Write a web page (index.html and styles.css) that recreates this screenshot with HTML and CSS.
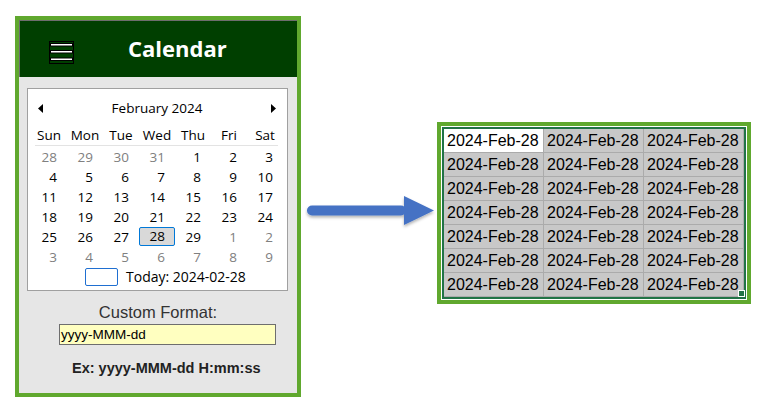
FILE: index.html
```html
<!DOCTYPE html>
<html lang="en">
<head>
<meta charset="utf-8">
<title>Calendar</title>
<link rel="stylesheet" href="styles.css">
</head>
<body>
<div class="scene">
  <section class="panel">
    <header class="bar">
      <svg class="menu" width="25" height="23" viewBox="0 0 25 23">
        <rect x="0.5" y="0.5" width="24" height="22" fill="none" stroke="#000"/>
        <rect x="1.5" y="2.5" width="22" height="2.5" fill="#fff" stroke="#000" stroke-width="1"/>
        <rect x="1.5" y="9.5" width="22" height="2.5" fill="#fff" stroke="#000" stroke-width="1"/>
        <rect x="1.5" y="17" width="22" height="2.5" fill="#fff" stroke="#000" stroke-width="1"/>
      </svg>
      <h1 class="title">Calendar</h1>
    </header>
    <div class="body">
      <div class="cal">
        <div class="nav">
          <svg class="tri" width="5" height="9" viewBox="0 0 5 9"><polygon points="5,0 0,4.5 5,9" fill="#000"/></svg>
          <span class="month">February 2024</span>
          <svg class="tri" width="5" height="9" viewBox="0 0 5 9"><polygon points="0,0 5,4.5 0,9" fill="#000"/></svg>
        </div>
        <div class="week">
          <span>Sun</span><span>Mon</span><span>Tue</span><span>Wed</span><span>Thu</span><span>Fri</span><span>Sat</span>
        </div>
        <div class="sep"></div>
        <div class="days">
          <span class="other">28</span><span class="other">29</span><span class="other">30</span><span class="other">31</span><span>1</span><span>2</span><span>3</span>
          <span>4</span><span>5</span><span>6</span><span>7</span><span>8</span><span>9</span><span>10</span>
          <span>11</span><span>12</span><span>13</span><span>14</span><span>15</span><span>16</span><span>17</span>
          <span>18</span><span>19</span><span>20</span><span>21</span><span>22</span><span>23</span><span>24</span>
          <span>25</span><span>26</span><span>27</span><span class="sel">28</span><span>29</span><span class="other">1</span><span class="other">2</span>
          <span class="other">3</span><span class="other">4</span><span class="other">5</span><span class="other">6</span><span class="other">7</span><span class="other">8</span><span class="other">9</span>
        </div>
        <div class="today">
          <span class="today-box"></span>
          <span class="today-text">Today: 2024-02-28</span>
        </div>
      </div>
      <div class="fmt-label">Custom Format:</div>
      <div class="fmt-input">yyyy-MMM-dd</div>
      <div class="example">Ex: yyyy-MMM-dd H:mm:ss</div>
    </div>
  </section>

  <svg class="arrow" width="132" height="42" viewBox="0 0 132 42">
    <defs>
      <filter id="sh" x="-10%" y="-30%" width="120%" height="170%">
        <feDropShadow dx="0" dy="2" stdDeviation="1.5" flood-color="#000" flood-opacity="0.3"/>
      </filter>
    </defs>
    <g filter="url(#sh)" fill="#4472c4">
      <rect x="2" y="15.5" width="99" height="10" rx="5"/>
      <polygon points="99,6 129,20.5 99,35"/>
    </g>
  </svg>

  <div class="sheet">
    <div class="grid">
      <span class="cell first">2024-Feb-28</span><span class="cell">2024-Feb-28</span><span class="cell">2024-Feb-28</span>
      <span class="cell">2024-Feb-28</span><span class="cell">2024-Feb-28</span><span class="cell">2024-Feb-28</span>
      <span class="cell">2024-Feb-28</span><span class="cell">2024-Feb-28</span><span class="cell">2024-Feb-28</span>
      <span class="cell">2024-Feb-28</span><span class="cell">2024-Feb-28</span><span class="cell">2024-Feb-28</span>
      <span class="cell">2024-Feb-28</span><span class="cell">2024-Feb-28</span><span class="cell">2024-Feb-28</span>
      <span class="cell">2024-Feb-28</span><span class="cell">2024-Feb-28</span><span class="cell">2024-Feb-28</span>
      <span class="cell">2024-Feb-28</span><span class="cell">2024-Feb-28</span><span class="cell">2024-Feb-28</span>
    </div>
    <span class="handle"></span>
  </div>
</div>
</body>
</html>
```

FILE: styles.css
```css
* { box-sizing: border-box; }

html, body {
  margin: 0;
  padding: 0;
  background: #fff;
}

body {
  width: 768px;
  height: 418px;
  overflow: hidden;
  font-family: "Open Sans", "Noto Sans", sans-serif;
}

.scene {
  display: flex;
  align-items: flex-start;
  padding: 16px 0 0 15px;
}

/* ---------- left panel ---------- */
.panel {
  width: 286px;
  height: 381px;
  border: 4px solid #60a82e;
  background: #e6e6e6;
  display: flex;
  flex-direction: column;
}

.bar {
  height: 57px;
  background: #003f00;
  border-top: 1px solid #6d6d6d;
  border-left: 1px solid #6d6d6d;
  display: flex;
  align-items: flex-start;
}

.menu {
  display: block;
  margin: 20px 0 0 29px;
}

.title {
  margin: 12px 0 0 54px;
  font-family: "Open Sans", sans-serif;
  font-weight: 700;
  font-size: 22px;
  line-height: 30px;
  color: #fff;
}

.body {
  flex: 1;
  display: flex;
  flex-direction: column;
  padding: 11px 0 0 0;
}

.cal {
  margin-left: 8px;
  width: 261px;
  height: 203px;
  background: #fff;
  border: 1px solid #a0a0a0;
  padding: 9px 0 0 3px;
  font-size: 13.5px;
  color: #000;
}

.nav {
  height: 20px;
  display: flex;
  align-items: center;
  justify-content: space-between;
  padding: 0 11px 0 7px;
}

.tri { display: block; }

.month {
  line-height: 20px;
}

.week {
  margin-top: 8px;
  display: grid;
  grid-template-columns: repeat(7, 36px);
  height: 19px;
  line-height: 19px;
  text-align: center;
}

.sep {
  height: 1px;
  background: #e3e3e3;
  margin: 0 9px 0 4px;
}

.days {
  margin-top: 1px;
  display: grid;
  grid-template-columns: repeat(7, 36px);
  grid-auto-rows: 20px;
}

.days span {
  text-align: right;
  padding-right: 10px;
  line-height: 20px;
}

.days .other { color: #808080; }

.days .sel {
  height: 19px;
  line-height: 17px;
  padding-right: 9px;
  background: #d9d9d9;
  border: 1px solid #0078d7;
  border-radius: 2px;
}

.today {
  height: 20px;
  display: flex;
  align-items: center;
  padding-left: 54px;
  gap: 8px;
}

.today-box {
  width: 33px;
  height: 18px;
  border: 1px solid #1f6fd1;
  border-radius: 2px;
  background: #fff;
}

.today-text {
  font-size: 14px;
  line-height: 20px;
}

.fmt-label {
  margin-top: 11px;
  text-align: center;
  font-family: "Liberation Sans", Arial, sans-serif;
  font-size: 16.5px;
  line-height: 20px;
  color: #333;
}

.fmt-input {
  margin: 2px 0 0 40px;
  width: 217px;
  height: 21px;
  background: #ffffc0;
  border: 1px solid #6e6e6e;
  padding-left: 1px;
  font-family: "Liberation Sans", Arial, sans-serif;
  font-size: 13.5px;
  line-height: 19px;
  color: #000;
}

.example {
  margin-top: 13px;
  padding-left: 53px;
  font-family: "Liberation Sans", Arial, sans-serif;
  font-weight: 700;
  font-size: 14.5px;
  line-height: 20px;
  color: #222;
}

/* ---------- arrow ---------- */
.arrow {
  display: block;
  margin: 174px 0 0 4px;
}

/* ---------- sheet ---------- */
.sheet {
  position: relative;
  margin-top: 106px;
  border: 4px solid #60a82e;
  padding: 1px;
  background: #fff;
}

.grid {
  border: 2px solid #217346;
  display: grid;
  grid-template-columns: repeat(3, 100px);
  grid-auto-rows: 24px;
}

.cell {
  background: #c8c8c8;
  border-right: 1px solid #ababab;
  border-bottom: 1px solid #ababab;
  padding-left: 3px;
  font-family: "Liberation Sans", Arial, sans-serif;
  font-size: 16px;
  line-height: 23px;
  color: #000;
  white-space: nowrap;
}

.cell.first { background: #fff; }

.handle {
  position: absolute;
  right: 2px;
  bottom: 3px;
  width: 7px;
  height: 7px;
  background: #217346;
  border: 1px solid #fff;
}
```
